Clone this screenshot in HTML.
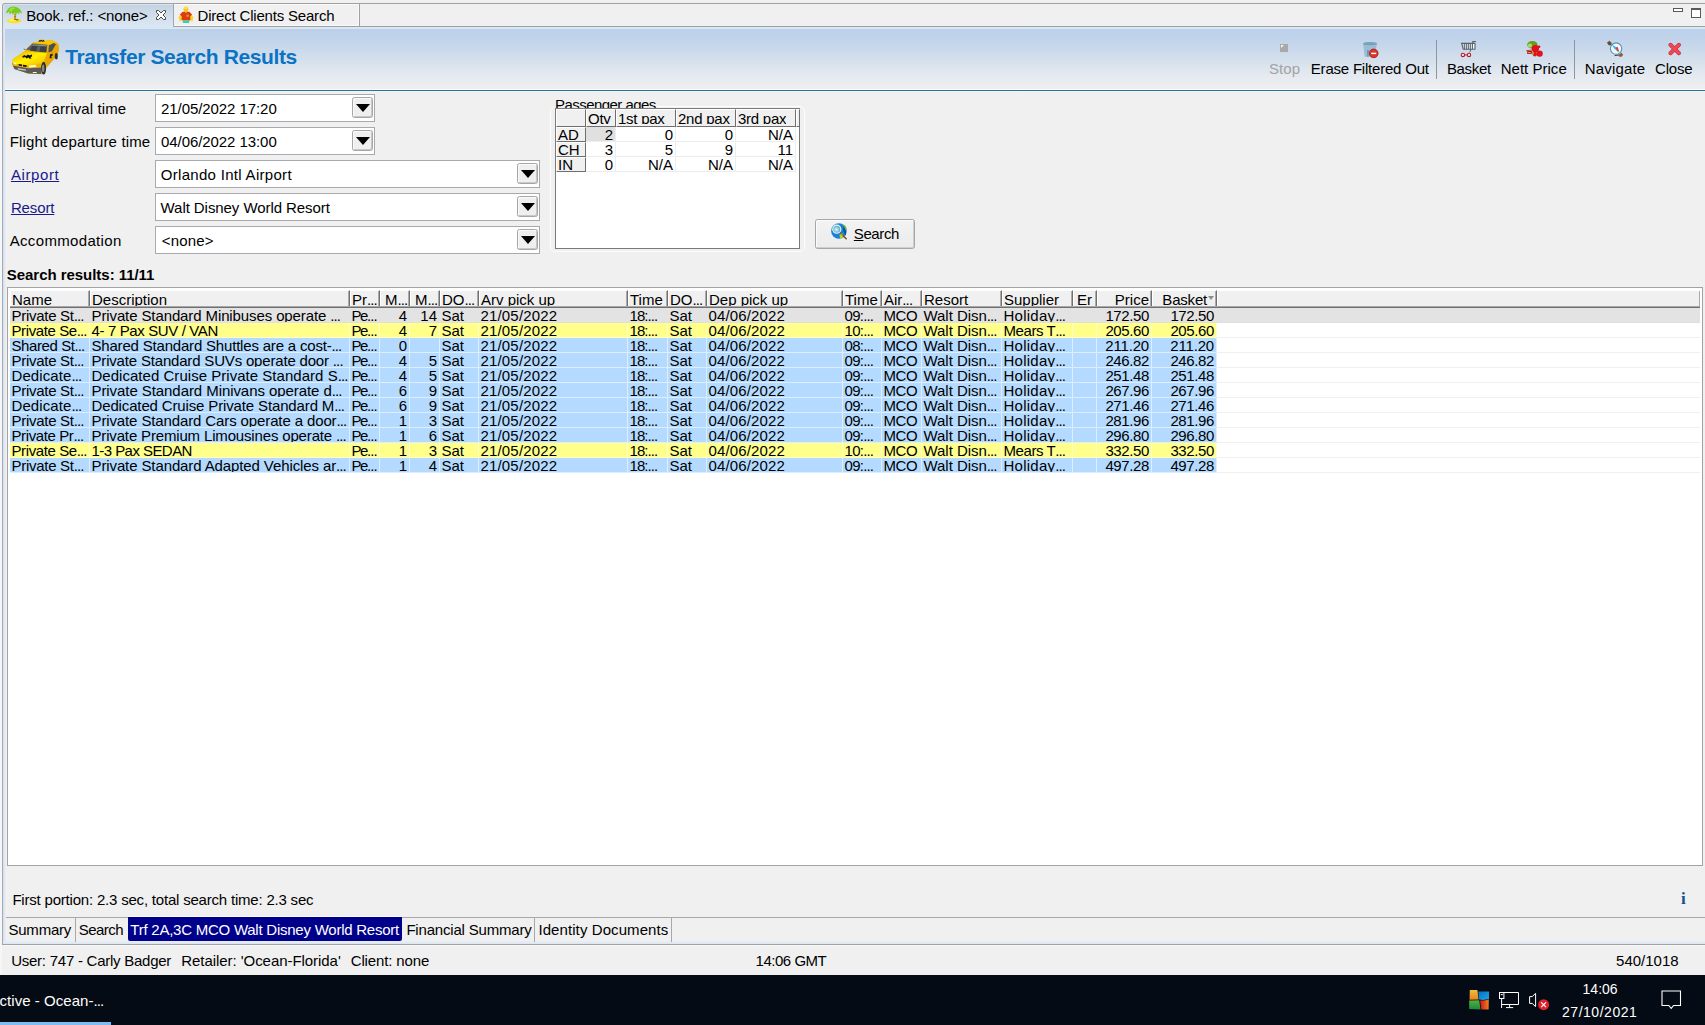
<!DOCTYPE html>
<html lang="en">
<head>
<meta charset="utf-8">
<title>Transfer Search Results</title>
<style>
*{box-sizing:border-box;margin:0;padding:0}
html,body{width:1705px;height:1025px;overflow:hidden;background:#f0f0f0}
body{position:relative;font-family:"Liberation Sans",sans-serif;font-size:15px;color:#000;line-height:18px}
.a{position:absolute;white-space:pre}
.t{position:absolute;white-space:pre;line-height:18px;height:18px}
.el{letter-spacing:-.9px}
/* top tab strip */
#topline{left:4px;top:3px;width:1701px;height:1px;background:#a0a0a0}
#topline2{left:173px;top:26px;width:1532px;height:1px;background:#a0a0a0}
#tab1{left:2px;top:3px;width:172px;height:26px;border:1px solid #9aa7b5;border-bottom:none;border-radius:3px 0 0 0;background:linear-gradient(#c4d2e0,#d2deeb 50%,#ddeaf6);box-shadow:inset 1px 1px 0 #dbe4ed}
#tab2{left:173px;top:4px;width:187px;height:22px;border-right:1px solid #a0a0a0;background:#f0f0f0;box-shadow:inset 1px 1px 0 #f9f9f9,inset -1px -1px 0 #f9f9f9}
/* header */
#strip{left:3px;top:27px;width:1702px;height:2px;background:#d9e6f4}
#hdr{left:5px;top:29px;width:1700px;height:60px;background:linear-gradient(#bbd0ea 0%,#c3d5eb 22%,#d3dfec 50%,#e4e9f0 75%,#efefef 100%)}
#hdrline{left:5px;top:89px;width:1700px;height:3px;background:linear-gradient(#f8fbfd 0,#f8fbfd 1px,#3d6b92 1px,#3d6b92 2px,#dffaff 2px)}
#lb0{left:0;top:4px;width:2px;height:971px;background:#f6f6f6}
#lb1{left:2px;top:28px;width:1px;height:916px;background:#a2acb8}
#lb2{left:3px;top:28px;width:3px;height:916px;background:linear-gradient(90deg,#d3dde9,#eef1f4)}
.ttl{position:absolute;white-space:pre;font-size:21px;font-weight:700;color:#0b72c4;line-height:24px}
.tb{position:absolute;white-space:pre;line-height:18px}
.sep{position:absolute;top:40px;width:1px;height:39px;background:#8f959c}
/* form */
.inp{position:absolute;height:28px;background:#fff;border:1px solid #a9a9ad}
.dd{position:absolute;width:21px;height:21px;border:1px solid #a6a6a6;background:#efefef;border-radius:2.5px;box-shadow:inset 1px 1px 0 #fafafa,inset -1px -1px 0 #c8c8c8}
.dd:after{content:"";position:absolute;left:3px;top:6px;border-left:7px solid transparent;border-right:7px solid transparent;border-top:8px solid #000}
.lnk{color:#1a1a8c;text-decoration:underline}
/* passenger ages */
#pgb{left:550px;top:106px;width:255px;height:146px;border:1px solid #fdfdfd;border-radius:5px}
#ptab{left:555px;top:108px;width:245px;height:141px;background:#fff;border:1px solid #7a7a7a}
.ph{position:absolute;height:18px;top:109px;background:#f0f0f0;border-left:1px solid #fff;border-top:1px solid #fff;border-right:1px solid #6e6e6e;border-bottom:1px solid #6e6e6e;overflow:hidden;white-space:pre;line-height:15px}
.ph>span{position:absolute;left:1px;top:1px;height:13px;overflow:hidden;letter-spacing:-.25px}
.pr{position:absolute;left:556px;width:30px;height:15px;background:#f0f0f0;border-left:1px solid #fff;border-top:1px solid #fff;border-right:1px solid #6e6e6e;border-bottom:1px solid #6e6e6e;overflow:hidden;white-space:pre;line-height:15px}
.pr>span{position:absolute;left:1px;top:-1px}
.pc{position:absolute;height:15px;overflow:hidden;white-space:pre;line-height:15px;border-right:1px solid #ededed;border-bottom:1px solid #ededed}
.pc>span{position:absolute;right:2px;top:0}
/* search btn */
#sbtn{left:815px;top:219px;width:100px;height:30px;border:1px solid #a6a6a6;background:linear-gradient(#f3f3f3,#ebebeb);border-radius:2.5px;box-shadow:inset 1px 1px 0 #fbfbfb,inset -1px -1px 0 #cfcfcf}
/* grid */
#grid{left:7px;top:287px;width:1696px;height:579px;background:#fff;border:1px solid #a3a3a3}
#gh{left:10px;top:290px;width:1690px;height:16px;background:#f0f0f0;border-top:1px solid #fff}
#ghl1{left:10px;top:306px;width:1690px;height:1px;background:#a8a8a8}
#ghl2{left:10px;top:307px;width:1690px;height:1px;background:#6f6f6f}
.hc{position:absolute;top:290px;height:17px;border-top:1px solid #fff;border-left:1px solid #fff;border-right:1px solid #707070;box-shadow:inset -1px 0 0 #ababab;overflow:hidden;white-space:pre;line-height:15px;background:#f0f0f0}
.hc>span{position:absolute;top:1px;left:1px}
.hc.r>span{left:auto;right:2px}
.row{position:absolute;left:10px;width:1690px;height:15px;border-bottom:1px solid #f0f0f0}
.row.sel{background:#e3e3e3;border-bottom-color:#dfdfdf}
.sel .c{border-color:transparent}
.c{position:absolute;top:0;height:15px;overflow:hidden;white-space:pre;line-height:15px;border-right:1px solid rgba(255,255,255,.55);border-bottom:1px solid rgba(255,255,255,.55)}
.c>span{position:absolute;left:1.5px;top:0}
.c.r>span{left:auto;right:2px}
.y .c{background:#ffff8a}
.b .c{background:#b4dbff}
/* bottom */
#tabtop{left:6px;top:917px;width:1699px;height:1px;background:#a8a8a8}
#tabbot{left:2px;top:944px;width:1703px;height:2px;background:linear-gradient(#9ea3a8 0,#9ea3a8 1px,#f8f8f8 1px)}
#tabbot0{left:3px;top:941px;width:1702px;height:3px;background:linear-gradient(#eaeff5,#dbe5ef)}
.bsep{position:absolute;top:918px;width:1px;height:24px;background:#a8a8a8}
#seltab{left:128px;top:916px;width:274px;height:25px;background:#00008b;border-top:1px solid #fafaff;border-radius:0 0 2px 2px}
#task{left:0;top:975px;width:1705px;height:50px;background:#050b15}
#taskul{left:0;top:1022px;width:111px;height:3px;background:#7cbcf0}
</style>
</head>
<body>
<div class="a" id="topline"></div><div class="a" id="topline2"></div>
<div class="a" id="tab2"></div><div class="a" id="tab1"></div>
<div class="t" style="letter-spacing:-0.11px;left:26.2px;top:7px">Book. ref.: &lt;none&gt;</div>
<div class="t" style="letter-spacing:-0.19px;left:197.5px;top:7px">Direct Clients Search</div>
<svg class="a" style="left:4px;top:4px" width="192" height="22" viewBox="4 4 192 22">
<!-- palm tree -->
<ellipse cx="14.2" cy="20.8" rx="7.2" ry="2.4" fill="#f7e31c"/><ellipse cx="13" cy="20.2" rx="4" ry="1.2" fill="#fff04a"/>
<path d="M14.2 13.4 16.2 13.6 15.9 17 16.6 20.2 14 20.2 14.2 17Z" fill="#f2c22a"/>
<path d="M14.3 14.8h1.8M14.2 16.4h1.8M14.1 18h2M14.2 19.5h2.3" stroke="#7a4a12" stroke-width=".7"/>
<path d="M16.2 19.6 18.6 19.4 18.4 20.2 16.4 20.4Z" fill="#3a3012"/>
<path d="M6 12.4 8 8.8 10.4 7 13.6 6.6 17 7.2 19.8 9 21.8 12 21.4 13.6 19.4 11.8 19.2 14.4 17.2 12.6 16.2 14.6 14.6 12.8 12.6 14.8 11.8 12.4 9.6 14.6 9.2 11.6 7 13.2Z" fill="#79cc1e"/>
<path d="M9 9.6 12 7.6 15.4 8 13 9.6 11 12Z" fill="#9be044"/>
<!-- tab close -->
<path d="M156.5 10.5 158.5 10.5 161 13 163.5 10.5 165.5 10.5 165.5 12.5 163 15 165.5 17.5 165.5 19.5 163.5 19.5 161 17 158.5 19.5 156.5 19.5 156.5 17.5 159 15 156.5 12.5Z" fill="#fff" stroke="#4a4a4a" stroke-width="1" stroke-linejoin="miter"/>
<!-- person -->
<circle cx="185.9" cy="8.9" r="2.5" fill="#f6c81a"/><ellipse cx="185.9" cy="8" rx="1.6" ry=".9" fill="#ffe860"/>
<path d="M180 14.4 182.6 11.8 189.4 11.8 192 14.4 191 19.6 189.4 20.4 182.6 20.4 181 19.6Z" fill="#e23a0c"/>
<path d="M184.6 11.8 186 13.6 187.4 11.8Z" fill="#f2a01a"/>
<rect x="186.4" y="14.6" width="2.4" height="2.2" fill="#a8b030"/>
<path d="M178.6 17 180.4 15 181.8 16.6 181.4 20.8 179.6 21.4Z" fill="#f8d428"/><path d="M193.4 17 191.6 15 190.2 16.6 190.6 20.8 192.4 21.4Z" fill="#f8d428"/>
<path d="M182.4 20.4 189.6 20.4 189 23 183 23Z" fill="#38d0b0"/>
</svg>
<svg class="a" style="left:1672px;top:7px" width="31" height="12" viewBox="1672 7 31 12">
<rect x="1673.5" y="8.5" width="9" height="3" fill="#fff" stroke="#595959"/>
<rect x="1691.5" y="8.5" width="9" height="9" fill="#fff" stroke="#595959"/><path d="M1691 9.5h10" stroke="#595959"/>
</svg>

<div class="a" id="lb0"></div><div class="a" id="lb1"></div><div class="a" id="lb2"></div>
<div class="a" id="strip"></div><div class="a" id="hdr"></div><div class="a" id="hdrline"></div>
<div class="ttl" style="letter-spacing:-0.38px;left:65.2px;top:45px">Transfer Search Results</div>
<svg class="a" style="left:5px;top:32px" width="65" height="50" viewBox="0 0 65 50">
<defs><linearGradient id="tx1" x1="0" y1="0" x2="1" y2="1"><stop offset="0" stop-color="#eeb000"/><stop offset=".5" stop-color="#fff200"/><stop offset="1" stop-color="#f2b000"/></linearGradient></defs>
<path d="M9.3 37 7 31.4 7.8 27.3 19.5 19.3 27 11 33.5 9.6 34 7.8 39 7.6 40 9 46.3 7.8 51.7 10.6 53.4 12.4 53.9 17.6 52.6 23.8 49.3 26.6 43 33.9 36.3 42.2 23 41.6Z" fill="#e9b400"/>
<path d="M7.8 27.3 19.5 19.5 42 21 38 31.2 23.4 33.9 7.3 31.2Z" fill="url(#tx1)"/>
<path d="M27 11 34 9.6 46.3 7.9 51.7 10.8 48.6 10.8 43.6 12.8Z" fill="#f6c800"/>
<path d="M42 21 44 13 53.2 12.2 53.8 17.6 52.4 23.6 49.3 26.4 43 33.8 40.3 30.6Z" fill="#e8a800"/>
<path d="M21 17.6 27.6 11.6 42.4 12.8 41.5 20.6 34.1 20Z" fill="#5a5f63"/>
<path d="M27 14 33 13 31 19.4 25 18.6Z M35.5 14.5 41.5 14.6 41 20 34.5 19.4Z" fill="#3c4043"/><path d="M28 12.4 41.6 13.2 41.6 14.2 27.4 13.4Z" fill="#8a9094"/>
<path d="M43.9 13.4 48.8 11 50.9 12.2 46.8 19.5 43.4 20.2Z" fill="#4b4f52"/>
<path d="M18.2 16.2 20.8 17.6 20 18Z" fill="#333"/>
<path d="M33.9 10 35 8 35.8 9.6 36.6 8 37.6 9.6 38.4 8 39 9.8" fill="none" stroke="#111" stroke-width=".8"/>
<path d="M17.2 24.6 19.4 23 21 24 23 22.4 24.6 23.4 26.8 22.6 27.2 24.4 25.4 25 26.6 26.6 24.4 26.8 23.4 25.4 21.4 26.4 20.2 25 18 25.8Z" fill="#111"/>
<path d="M45 22.4 47.4 21.6 47.8 23.6 46.2 24.4 46.8 26 44.6 26.4Z" fill="#222"/>
<path d="M7 31.2 23.4 34.2 36.2 33.6 36.2 42 23 41.6 9.3 37Z" fill="#5b5b5b"/><path d="M7 31.2 23.4 33.4 36.4 33 36.4 35.4 23.4 36.2 7.6 33.4Z" fill="#f0b800"/>
<path d="M13.6 31.9 17 32.5 17 34.3 13.6 33.6Z M18 32.7 21.6 33.2 21.6 34.9 18 34.5Z" fill="#15120a"/>
<path d="M24 33.4 31 33 31.4 34.8 24 35.4Z" fill="#fffde0"/>
<path d="M8.6 30.5 11.2 31 11.2 32.4 8.6 32Z" fill="#fffde0"/>
<path d="M12.7 36 21 37.4 21 38.8 12.7 37.4Z" fill="#c9c9c9"/>
<path d="M27.8 40 31.7 40 31.7 41 27.8 41Z" fill="#f4f4f4"/>
<ellipse cx="38.6" cy="36.2" rx="2.5" ry="6.4" fill="#2e2e2e"/><ellipse cx="38.2" cy="36.4" rx="1.2" ry="3.8" fill="#8a8a8a"/>
<ellipse cx="51.3" cy="24.2" rx="1.5" ry="3.2" fill="#2e2e2e"/>
</svg>

<div class="tb" style="letter-spacing:0.11px;left:1268.9px;top:60px;color:#a3a3a3">Stop</div>
<div class="tb" style="letter-spacing:-0.21px;left:1310.8px;top:60px">Erase Filtered Out</div>
<div class="tb" style="letter-spacing:-0.33px;left:1446.9px;top:60px">Basket</div>
<div class="tb" style="letter-spacing:0.02px;left:1500.7px;top:60px">Nett Price</div>
<div class="tb" style="letter-spacing:0.16px;left:1584.8px;top:60px">Navigate</div>
<div class="tb" style="letter-spacing:-0.19px;left:1655.0px;top:60px">Close</div>
<div class="sep" style="left:1436px"></div><div class="sep" style="left:1574px"></div>
<svg class="a" style="left:1275px;top:38px" width="420" height="22" viewBox="1275 38 420 22">
<!-- stop -->
<rect x="1280" y="44" width="8" height="8" fill="#a9a9a9"/><path d="M1281 45h3l-3 3z" fill="#f4f4f4"/>
<!-- erase filtered out: bin + red minus -->
<path d="M1363 44 1377 44 1376.4 47 1374 56.8 1364.6 56.8 1363.6 47Z" fill="#9bbcd2"/>
<path d="M1367 50 1369 50 1368.6 56.8 1367.2 56.8Z" fill="#6f97b4"/>
<ellipse cx="1370" cy="43.6" rx="7" ry="1.7" fill="#6e9ab8"/><ellipse cx="1370" cy="43.3" rx="5.6" ry="1" fill="#7ba5c0"/>
<circle cx="1373.7" cy="53.4" r="4.6" fill="#d8372c"/><circle cx="1373.7" cy="53.4" r="4.3" fill="none" stroke="#a81e22" stroke-width=".7"/>
<rect x="1371.2" y="52.7" width="5" height="1.4" fill="#fff"/>
<!-- basket -->
<path d="M1461.8 43.4 1463.2 49.4 1475 49.4 1475 43.4Z" fill="#f4f6f8"/>
<path d="M1461 43.4H1475.4M1472.8 43.4V41.5H1476M1463.2 49.3H1475.2M1475 43.4V49.4M1461.8 43.4 1463.2 49.4" fill="none" stroke="#56616b" stroke-width="1.1"/>
<path d="M1464.3 43.4V49.3M1466.3 43.4V49.3M1468.3 43.4V49.3M1470.3 43.4V49.3M1472.4 43.4V49.3" stroke="#56616b" stroke-width="1.1"/>
<path d="M1470.7 49.4 1470.5 51.2 1469.3 52.2" fill="none" stroke="#56616b" stroke-width="1"/>
<circle cx="1462.9" cy="54.9" r="1.7" fill="#ffe6e8" stroke="#b41c2c" stroke-width="1.1"/><circle cx="1469" cy="54.9" r="1.7" fill="#ffe6e8" stroke="#b41c2c" stroke-width="1.1"/>
<path d="M1464.8 54.9H1467.2" stroke="#b41c2c" stroke-width="1"/>
<!-- nett price -->
<ellipse cx="1532.4" cy="44.8" rx="5.2" ry="3.8" fill="#62a01c"/><ellipse cx="1530" cy="45.4" rx="2.2" ry="2" fill="#aad870"/>
<circle cx="1535.3" cy="48.8" r="3.7" fill="#e0121c"/><circle cx="1539.6" cy="53.6" r="3.2" fill="#e0121c"/><circle cx="1539.1" cy="46.8" r="1.3" fill="#d30f1a"/>
<circle cx="1534.9" cy="54.6" r="2" fill="#e0121c"/><path d="M1533.4 50 1536.4 51.4 1536 55 1533.4 54Z" fill="#e0121c"/>
<rect x="1527.2" y="51" width="4.8" height="2.9" fill="#b81520"/><rect x="1528.2" y="52" width="2.4" height="1" fill="#ff9a9a"/>
<path d="M1526.2 50.6 1531.8 50.2" stroke="#a85a18" stroke-width="1"/>
<circle cx="1532.8" cy="53.4" r="1.3" fill="#a8a030"/>
<!-- navigate compass -->
<circle cx="1616.1" cy="48.6" r="5.7" fill="#f2f9fd" stroke="#5a8fc0" stroke-width="1.1"/>
<path d="M1611.6 44.4 1617.2 47.8 1615 49.8Z" fill="#3cb4e0"/>
<path d="M1620.2 53.4 1615 49.8 1617.2 47.8Z" fill="#6fd0e6"/>
<path d="M1615.6 48 1617.4 46.6 1619 50.8 1617.6 51.6Z" fill="#d8402c"/>
<path d="M1607 42.6 1609.6 40.8 1612 43.6 1610.6 45.4 1608.4 45Z" fill="#6e4e2a"/><path d="M1619.2 54.2 1621.6 52.8 1623.2 55 1621.2 57 1618.6 56.2Z" fill="#86623a"/>
<path d="M1614.6 55.6 1619 55" stroke="#4a3a2a" stroke-width="1"/>
<!-- close X -->
<path d="M1670.4 44.8 1679 53.2M1679 44.8 1670.4 53.2" stroke="#cf3040" stroke-width="4" stroke-linecap="round"/>
<path d="M1670.4 44.8 1679 53.2M1679 44.8 1670.4 53.2" stroke="#ee4a56" stroke-width="2.6" stroke-linecap="round"/>
</svg>

<div class="t" style="letter-spacing:0.12px;left:9.8px;top:100px">Flight arrival time</div>
<div class="t" style="letter-spacing:0.14px;left:9.8px;top:133px">Flight departure time</div>
<div class="t lnk" style="letter-spacing:0.60px;left:10.9px;top:166px">Airport</div>
<div class="t lnk" style="letter-spacing:-0.13px;left:10.9px;top:199px">Resort</div>
<div class="t" style="letter-spacing:0.34px;left:9.7px;top:232px">Accommodation</div>
<div class="inp" style="left:155px;top:94px;width:220px"></div>
<div class="dd" style="left:352px;top:97px"></div>
<div class="t" style="letter-spacing:-0.07px;left:161.0px;top:100px">21/05/2022 17:20</div>
<div class="inp" style="left:155px;top:127px;width:220px"></div>
<div class="dd" style="left:352px;top:130px"></div>
<div class="t" style="letter-spacing:-0.07px;left:161.0px;top:133px">04/06/2022 13:00</div>
<div class="inp" style="left:155px;top:160px;width:385px"></div>
<div class="dd" style="left:517px;top:163px"></div>
<div class="t" style="letter-spacing:0.30px;left:160.8px;top:166px">Orlando Intl Airport</div>
<div class="inp" style="left:155px;top:193px;width:385px"></div>
<div class="dd" style="left:517px;top:196px"></div>
<div class="t" style="letter-spacing:-0.07px;left:160.6px;top:199px">Walt Disney World Resort</div>
<div class="inp" style="left:155px;top:226px;width:385px"></div>
<div class="dd" style="left:517px;top:229px"></div>
<div class="t" style="letter-spacing:0.15px;left:161.8px;top:232px">&lt;none&gt;</div>
<div class="t" style="letter-spacing:-0.04px;left:6.8px;top:266px;font-weight:700">Search results: 11/11</div>
<div class="a" id="pgb"></div>
<div class="a" style="left:554px;top:96px;height:12px;overflow:hidden;line-height:18px;letter-spacing:-.55px;background:#f0f0f0;padding:0 1px">Passenger ages</div>
<div class="a" id="ptab"></div>
<div class="ph" style="left:556px;width:30px"><span></span></div>
<div class="ph" style="left:586px;width:30px"><span>Qty</span></div>
<div class="ph" style="left:616px;width:60px"><span>1st pax</span></div>
<div class="ph" style="left:676px;width:60px"><span>2nd pax</span></div>
<div class="ph" style="left:736px;width:60px"><span>3rd pax</span></div>
<div class="ph" style="left:796px;width:4px"><span></span></div>
<div class="pr" style="top:127px"><span>AD</span></div>
<div class="pc" style="left:586px;top:127px;width:30px;background:#e0e0e0"><span>2</span></div>
<div class="pc" style="left:616px;top:127px;width:60px"><span>0</span></div>
<div class="pc" style="left:676px;top:127px;width:60px"><span>0</span></div>
<div class="pc" style="left:736px;top:127px;width:60px"><span>N/A</span></div>
<div class="pr" style="top:142px"><span>CH</span></div>
<div class="pc" style="left:586px;top:142px;width:30px"><span>3</span></div>
<div class="pc" style="left:616px;top:142px;width:60px"><span>5</span></div>
<div class="pc" style="left:676px;top:142px;width:60px"><span>9</span></div>
<div class="pc" style="left:736px;top:142px;width:60px"><span>11</span></div>
<div class="pr" style="top:157px"><span>IN</span></div>
<div class="pc" style="left:586px;top:157px;width:30px"><span>0</span></div>
<div class="pc" style="left:616px;top:157px;width:60px"><span>N/A</span></div>
<div class="pc" style="left:676px;top:157px;width:60px"><span>N/A</span></div>
<div class="pc" style="left:736px;top:157px;width:60px"><span>N/A</span></div>
<div class="a" id="sbtn"></div>
<div class="t" style="letter-spacing:-0.39px;left:853.8px;top:225px"><u>S</u>earch</div>
<svg class="a" style="left:829px;top:221px" width="20" height="20" viewBox="829 221 20 20">
<defs><radialGradient id="lens" cx=".45" cy=".55" r=".6"><stop offset="0" stop-color="#eafff4"/><stop offset=".45" stop-color="#9ccfd8"/><stop offset="1" stop-color="#5a98c8"/></radialGradient></defs>
<circle cx="838.9" cy="231" r="7.8" fill="#1b80d6"/>
<path d="M842.4 224 845.6 226 846.9 229.4 845.6 230.6 844.6 228.4 843.2 226.6Z" fill="#5fc23a"/>
<path d="M843.6 225.6 846.2 232 845.6 236 843 230Z" fill="#0c4f9c"/>
<path d="M839.6 234.6 842.6 233.6 844 236.6 841.6 238.4 839.8 237.6Z" fill="#a6e02a"/>
<circle cx="836.8" cy="229.2" r="4.6" fill="#dffcff"/>
<circle cx="836.8" cy="229.2" r="3.5" fill="url(#lens)"/>
<path d="M840.4 233.2 846.2 238.8" stroke="#7a4a16" stroke-width="1.5" stroke-linecap="round"/>
<path d="M840.6 233.6 842.6 235.6" stroke="#c8b020" stroke-width="1.2"/>
</svg>

<div class="a" id="grid"></div><div class="a" id="gh"></div>
<div class="hc" style="left:10px;width:80px"><span>Name</span></div>
<div class="hc" style="left:90px;width:260px"><span>Description</span></div>
<div class="hc" style="left:350px;width:30px"><span>Pr<span class="el">...</span></span></div>
<div class="hc" style="left:380px;width:30px"><span style="left:4px">M<span class="el">...</span></span></div>
<div class="hc" style="left:410px;width:30px"><span style="left:4px">M<span class="el">...</span></span></div>
<div class="hc" style="left:440px;width:39px"><span>DO<span class="el">...</span></span></div>
<div class="hc" style="left:479px;width:149px"><span>Arv pick up</span></div>
<div class="hc" style="left:628px;width:40px"><span>Time</span></div>
<div class="hc" style="left:668px;width:39px"><span>DO<span class="el">...</span></span></div>
<div class="hc" style="left:707px;width:136px"><span>Dep pick up</span></div>
<div class="hc" style="left:843px;width:39px"><span>Time</span></div>
<div class="hc" style="left:882px;width:40px"><span>Air<span class="el">...</span></span></div>
<div class="hc" style="left:922px;width:80px"><span>Resort</span></div>
<div class="hc" style="left:1002px;width:71px"><span>Supplier</span></div>
<div class="hc" style="left:1073px;width:24px"><span style="left:3px">Er</span></div>
<div class="hc r" style="left:1097px;width:55px"><span>Price</span></div>
<div class="hc" style="left:1152px;width:65px"><span style="left:auto;right:9px;letter-spacing:-.2px">Basket</span><i style="position:absolute;right:2px;top:5px;border-left:3.5px solid transparent;border-right:3.5px solid transparent;border-top:4px solid #8c8c8c"></i></div>
<div class="hc" style="left:1217px;width:483px;border-right:none"></div>
<div class="a" id="ghl1"></div><div class="a" id="ghl2"></div>
<div class="row sel" style="top:308px">
<div class="c" style="left:0px;width:80px"><span style="letter-spacing:-0.28px">Private St<span class="el">...</span></span></div>
<div class="c" style="left:80px;width:260px"><span style="letter-spacing:-0.11px">Private Standard Minibuses operate <span class="el">...</span></span></div>
<div class="c" style="left:340px;width:30px"><span style="letter-spacing:-1.40px">Pe<span class="el">...</span></span></div>
<div class="c r" style="left:370px;width:30px"><span>4</span></div>
<div class="c r" style="left:400px;width:30px"><span>14</span></div>
<div class="c" style="left:430px;width:39px"><span>Sat</span></div>
<div class="c" style="left:469px;width:149px"><span style="letter-spacing:0.17px">21/05/2022</span></div>
<div class="c" style="left:618px;width:40px"><span style="letter-spacing:-0.96px">18:<span class="el">...</span></span></div>
<div class="c" style="left:658px;width:39px"><span>Sat</span></div>
<div class="c" style="left:697px;width:136px"><span style="letter-spacing:0.14px">04/06/2022</span></div>
<div class="c" style="left:833px;width:39px"><span style="letter-spacing:-0.69px">09:<span class="el">...</span></span></div>
<div class="c" style="left:872px;width:40px"><span style="letter-spacing:-0.47px">MCO</span></div>
<div class="c" style="left:912px;width:80px"><span style="letter-spacing:-0.04px">Walt Disn<span class="el">...</span></span></div>
<div class="c" style="left:992px;width:71px"><span style="letter-spacing:0.25px">Holiday<span class="el">...</span></span></div>
<div class="c" style="left:1063px;width:24px"><span></span></div>
<div class="c r" style="left:1087px;width:55px"><span style="letter-spacing:-0.38px">172.50</span></div>
<div class="c r" style="left:1142px;width:65px"><span style="letter-spacing:-0.38px">172.50</span></div>
</div>
<div class="row y" style="top:323px">
<div class="c" style="left:0px;width:80px"><span style="letter-spacing:-0.40px">Private Se<span class="el">...</span></span></div>
<div class="c" style="left:80px;width:260px"><span style="letter-spacing:-0.37px">4- 7 Pax SUV / VAN</span></div>
<div class="c" style="left:340px;width:30px"><span style="letter-spacing:-1.40px">Pe<span class="el">...</span></span></div>
<div class="c r" style="left:370px;width:30px"><span>4</span></div>
<div class="c r" style="left:400px;width:30px"><span>7</span></div>
<div class="c" style="left:430px;width:39px"><span>Sat</span></div>
<div class="c" style="left:469px;width:149px"><span style="letter-spacing:0.17px">21/05/2022</span></div>
<div class="c" style="left:618px;width:40px"><span style="letter-spacing:-0.96px">18:<span class="el">...</span></span></div>
<div class="c" style="left:658px;width:39px"><span>Sat</span></div>
<div class="c" style="left:697px;width:136px"><span style="letter-spacing:0.14px">04/06/2022</span></div>
<div class="c" style="left:833px;width:39px"><span style="letter-spacing:-0.69px">10:<span class="el">...</span></span></div>
<div class="c" style="left:872px;width:40px"><span style="letter-spacing:-0.47px">MCO</span></div>
<div class="c" style="left:912px;width:80px"><span style="letter-spacing:-0.04px">Walt Disn<span class="el">...</span></span></div>
<div class="c" style="left:992px;width:71px"><span style="letter-spacing:-0.42px">Mears T<span class="el">...</span></span></div>
<div class="c" style="left:1063px;width:24px"><span></span></div>
<div class="c r" style="left:1087px;width:55px"><span style="letter-spacing:-0.38px">205.60</span></div>
<div class="c r" style="left:1142px;width:65px"><span style="letter-spacing:-0.38px">205.60</span></div>
</div>
<div class="row b" style="top:338px">
<div class="c" style="left:0px;width:80px"><span style="letter-spacing:-0.41px">Shared St<span class="el">...</span></span></div>
<div class="c" style="left:80px;width:260px"><span style="letter-spacing:-0.19px">Shared Standard Shuttles are a cost-<span class="el">...</span></span></div>
<div class="c" style="left:340px;width:30px"><span style="letter-spacing:-1.40px">Pe<span class="el">...</span></span></div>
<div class="c r" style="left:370px;width:30px"><span>0</span></div>
<div class="c r" style="left:400px;width:30px"><span></span></div>
<div class="c" style="left:430px;width:39px"><span>Sat</span></div>
<div class="c" style="left:469px;width:149px"><span style="letter-spacing:0.17px">21/05/2022</span></div>
<div class="c" style="left:618px;width:40px"><span style="letter-spacing:-0.96px">18:<span class="el">...</span></span></div>
<div class="c" style="left:658px;width:39px"><span>Sat</span></div>
<div class="c" style="left:697px;width:136px"><span style="letter-spacing:0.14px">04/06/2022</span></div>
<div class="c" style="left:833px;width:39px"><span style="letter-spacing:-0.69px">08:<span class="el">...</span></span></div>
<div class="c" style="left:872px;width:40px"><span style="letter-spacing:-0.47px">MCO</span></div>
<div class="c" style="left:912px;width:80px"><span style="letter-spacing:-0.04px">Walt Disn<span class="el">...</span></span></div>
<div class="c" style="left:992px;width:71px"><span style="letter-spacing:0.25px">Holiday<span class="el">...</span></span></div>
<div class="c" style="left:1063px;width:24px"><span></span></div>
<div class="c r" style="left:1087px;width:55px"><span style="letter-spacing:-0.19px">211.20</span></div>
<div class="c r" style="left:1142px;width:65px"><span style="letter-spacing:-0.19px">211.20</span></div>
</div>
<div class="row b" style="top:353px">
<div class="c" style="left:0px;width:80px"><span style="letter-spacing:-0.28px">Private St<span class="el">...</span></span></div>
<div class="c" style="left:80px;width:260px"><span style="letter-spacing:-0.18px">Private Standard SUVs operate door <span class="el">...</span></span></div>
<div class="c" style="left:340px;width:30px"><span style="letter-spacing:-1.40px">Pe<span class="el">...</span></span></div>
<div class="c r" style="left:370px;width:30px"><span>4</span></div>
<div class="c r" style="left:400px;width:30px"><span>5</span></div>
<div class="c" style="left:430px;width:39px"><span>Sat</span></div>
<div class="c" style="left:469px;width:149px"><span style="letter-spacing:0.17px">21/05/2022</span></div>
<div class="c" style="left:618px;width:40px"><span style="letter-spacing:-0.96px">18:<span class="el">...</span></span></div>
<div class="c" style="left:658px;width:39px"><span>Sat</span></div>
<div class="c" style="left:697px;width:136px"><span style="letter-spacing:0.14px">04/06/2022</span></div>
<div class="c" style="left:833px;width:39px"><span style="letter-spacing:-0.69px">09:<span class="el">...</span></span></div>
<div class="c" style="left:872px;width:40px"><span style="letter-spacing:-0.47px">MCO</span></div>
<div class="c" style="left:912px;width:80px"><span style="letter-spacing:-0.04px">Walt Disn<span class="el">...</span></span></div>
<div class="c" style="left:992px;width:71px"><span style="letter-spacing:0.25px">Holiday<span class="el">...</span></span></div>
<div class="c" style="left:1063px;width:24px"><span></span></div>
<div class="c r" style="left:1087px;width:55px"><span style="letter-spacing:-0.38px">246.82</span></div>
<div class="c r" style="left:1142px;width:65px"><span style="letter-spacing:-0.38px">246.82</span></div>
</div>
<div class="row b" style="top:368px">
<div class="c" style="left:0px;width:80px"><span style="letter-spacing:0.10px">Dedicate<span class="el">...</span></span></div>
<div class="c" style="left:80px;width:260px"><span style="letter-spacing:0.03px">Dedicated Cruise Private Standard S<span class="el">...</span></span></div>
<div class="c" style="left:340px;width:30px"><span style="letter-spacing:-1.40px">Pe<span class="el">...</span></span></div>
<div class="c r" style="left:370px;width:30px"><span>4</span></div>
<div class="c r" style="left:400px;width:30px"><span>5</span></div>
<div class="c" style="left:430px;width:39px"><span>Sat</span></div>
<div class="c" style="left:469px;width:149px"><span style="letter-spacing:0.17px">21/05/2022</span></div>
<div class="c" style="left:618px;width:40px"><span style="letter-spacing:-0.96px">18:<span class="el">...</span></span></div>
<div class="c" style="left:658px;width:39px"><span>Sat</span></div>
<div class="c" style="left:697px;width:136px"><span style="letter-spacing:0.14px">04/06/2022</span></div>
<div class="c" style="left:833px;width:39px"><span style="letter-spacing:-0.69px">09:<span class="el">...</span></span></div>
<div class="c" style="left:872px;width:40px"><span style="letter-spacing:-0.47px">MCO</span></div>
<div class="c" style="left:912px;width:80px"><span style="letter-spacing:-0.04px">Walt Disn<span class="el">...</span></span></div>
<div class="c" style="left:992px;width:71px"><span style="letter-spacing:0.25px">Holiday<span class="el">...</span></span></div>
<div class="c" style="left:1063px;width:24px"><span></span></div>
<div class="c r" style="left:1087px;width:55px"><span style="letter-spacing:-0.38px">251.48</span></div>
<div class="c r" style="left:1142px;width:65px"><span style="letter-spacing:-0.38px">251.48</span></div>
</div>
<div class="row b" style="top:383px">
<div class="c" style="left:0px;width:80px"><span style="letter-spacing:-0.28px">Private St<span class="el">...</span></span></div>
<div class="c" style="left:80px;width:260px"><span style="letter-spacing:-0.07px">Private Standard Minivans operate d<span class="el">...</span></span></div>
<div class="c" style="left:340px;width:30px"><span style="letter-spacing:-1.40px">Pe<span class="el">...</span></span></div>
<div class="c r" style="left:370px;width:30px"><span>6</span></div>
<div class="c r" style="left:400px;width:30px"><span>9</span></div>
<div class="c" style="left:430px;width:39px"><span>Sat</span></div>
<div class="c" style="left:469px;width:149px"><span style="letter-spacing:0.17px">21/05/2022</span></div>
<div class="c" style="left:618px;width:40px"><span style="letter-spacing:-0.96px">18:<span class="el">...</span></span></div>
<div class="c" style="left:658px;width:39px"><span>Sat</span></div>
<div class="c" style="left:697px;width:136px"><span style="letter-spacing:0.14px">04/06/2022</span></div>
<div class="c" style="left:833px;width:39px"><span style="letter-spacing:-0.69px">09:<span class="el">...</span></span></div>
<div class="c" style="left:872px;width:40px"><span style="letter-spacing:-0.47px">MCO</span></div>
<div class="c" style="left:912px;width:80px"><span style="letter-spacing:-0.04px">Walt Disn<span class="el">...</span></span></div>
<div class="c" style="left:992px;width:71px"><span style="letter-spacing:0.25px">Holiday<span class="el">...</span></span></div>
<div class="c" style="left:1063px;width:24px"><span></span></div>
<div class="c r" style="left:1087px;width:55px"><span style="letter-spacing:-0.38px">267.96</span></div>
<div class="c r" style="left:1142px;width:65px"><span style="letter-spacing:-0.38px">267.96</span></div>
</div>
<div class="row b" style="top:398px">
<div class="c" style="left:0px;width:80px"><span style="letter-spacing:0.10px">Dedicate<span class="el">...</span></span></div>
<div class="c" style="left:80px;width:260px"><span style="letter-spacing:-0.14px">Dedicated Cruise Private Standard M<span class="el">...</span></span></div>
<div class="c" style="left:340px;width:30px"><span style="letter-spacing:-1.40px">Pe<span class="el">...</span></span></div>
<div class="c r" style="left:370px;width:30px"><span>6</span></div>
<div class="c r" style="left:400px;width:30px"><span>9</span></div>
<div class="c" style="left:430px;width:39px"><span>Sat</span></div>
<div class="c" style="left:469px;width:149px"><span style="letter-spacing:0.17px">21/05/2022</span></div>
<div class="c" style="left:618px;width:40px"><span style="letter-spacing:-0.96px">18:<span class="el">...</span></span></div>
<div class="c" style="left:658px;width:39px"><span>Sat</span></div>
<div class="c" style="left:697px;width:136px"><span style="letter-spacing:0.14px">04/06/2022</span></div>
<div class="c" style="left:833px;width:39px"><span style="letter-spacing:-0.69px">09:<span class="el">...</span></span></div>
<div class="c" style="left:872px;width:40px"><span style="letter-spacing:-0.47px">MCO</span></div>
<div class="c" style="left:912px;width:80px"><span style="letter-spacing:-0.04px">Walt Disn<span class="el">...</span></span></div>
<div class="c" style="left:992px;width:71px"><span style="letter-spacing:0.25px">Holiday<span class="el">...</span></span></div>
<div class="c" style="left:1063px;width:24px"><span></span></div>
<div class="c r" style="left:1087px;width:55px"><span style="letter-spacing:-0.38px">271.46</span></div>
<div class="c r" style="left:1142px;width:65px"><span style="letter-spacing:-0.38px">271.46</span></div>
</div>
<div class="row b" style="top:413px">
<div class="c" style="left:0px;width:80px"><span style="letter-spacing:-0.28px">Private St<span class="el">...</span></span></div>
<div class="c" style="left:80px;width:260px"><span style="letter-spacing:-0.12px">Private Standard Cars operate a door<span class="el">...</span></span></div>
<div class="c" style="left:340px;width:30px"><span style="letter-spacing:-1.40px">Pe<span class="el">...</span></span></div>
<div class="c r" style="left:370px;width:30px"><span>1</span></div>
<div class="c r" style="left:400px;width:30px"><span>3</span></div>
<div class="c" style="left:430px;width:39px"><span>Sat</span></div>
<div class="c" style="left:469px;width:149px"><span style="letter-spacing:0.17px">21/05/2022</span></div>
<div class="c" style="left:618px;width:40px"><span style="letter-spacing:-0.96px">18:<span class="el">...</span></span></div>
<div class="c" style="left:658px;width:39px"><span>Sat</span></div>
<div class="c" style="left:697px;width:136px"><span style="letter-spacing:0.14px">04/06/2022</span></div>
<div class="c" style="left:833px;width:39px"><span style="letter-spacing:-0.69px">09:<span class="el">...</span></span></div>
<div class="c" style="left:872px;width:40px"><span style="letter-spacing:-0.47px">MCO</span></div>
<div class="c" style="left:912px;width:80px"><span style="letter-spacing:-0.04px">Walt Disn<span class="el">...</span></span></div>
<div class="c" style="left:992px;width:71px"><span style="letter-spacing:0.25px">Holiday<span class="el">...</span></span></div>
<div class="c" style="left:1063px;width:24px"><span></span></div>
<div class="c r" style="left:1087px;width:55px"><span style="letter-spacing:-0.38px">281.96</span></div>
<div class="c r" style="left:1142px;width:65px"><span style="letter-spacing:-0.38px">281.96</span></div>
</div>
<div class="row b" style="top:428px">
<div class="c" style="left:0px;width:80px"><span style="letter-spacing:-0.39px">Private Pr<span class="el">...</span></span></div>
<div class="c" style="left:80px;width:260px"><span style="letter-spacing:-0.16px">Private Premium Limousines operate <span class="el">...</span></span></div>
<div class="c" style="left:340px;width:30px"><span style="letter-spacing:-1.40px">Pe<span class="el">...</span></span></div>
<div class="c r" style="left:370px;width:30px"><span>1</span></div>
<div class="c r" style="left:400px;width:30px"><span>6</span></div>
<div class="c" style="left:430px;width:39px"><span>Sat</span></div>
<div class="c" style="left:469px;width:149px"><span style="letter-spacing:0.17px">21/05/2022</span></div>
<div class="c" style="left:618px;width:40px"><span style="letter-spacing:-0.96px">18:<span class="el">...</span></span></div>
<div class="c" style="left:658px;width:39px"><span>Sat</span></div>
<div class="c" style="left:697px;width:136px"><span style="letter-spacing:0.14px">04/06/2022</span></div>
<div class="c" style="left:833px;width:39px"><span style="letter-spacing:-0.69px">09:<span class="el">...</span></span></div>
<div class="c" style="left:872px;width:40px"><span style="letter-spacing:-0.47px">MCO</span></div>
<div class="c" style="left:912px;width:80px"><span style="letter-spacing:-0.04px">Walt Disn<span class="el">...</span></span></div>
<div class="c" style="left:992px;width:71px"><span style="letter-spacing:0.25px">Holiday<span class="el">...</span></span></div>
<div class="c" style="left:1063px;width:24px"><span></span></div>
<div class="c r" style="left:1087px;width:55px"><span style="letter-spacing:-0.38px">296.80</span></div>
<div class="c r" style="left:1142px;width:65px"><span style="letter-spacing:-0.38px">296.80</span></div>
</div>
<div class="row y" style="top:443px">
<div class="c" style="left:0px;width:80px"><span style="letter-spacing:-0.40px">Private Se<span class="el">...</span></span></div>
<div class="c" style="left:80px;width:260px"><span style="letter-spacing:-0.55px">1-3 Pax SEDAN</span></div>
<div class="c" style="left:340px;width:30px"><span style="letter-spacing:-1.40px">Pe<span class="el">...</span></span></div>
<div class="c r" style="left:370px;width:30px"><span>1</span></div>
<div class="c r" style="left:400px;width:30px"><span>3</span></div>
<div class="c" style="left:430px;width:39px"><span>Sat</span></div>
<div class="c" style="left:469px;width:149px"><span style="letter-spacing:0.17px">21/05/2022</span></div>
<div class="c" style="left:618px;width:40px"><span style="letter-spacing:-0.96px">18:<span class="el">...</span></span></div>
<div class="c" style="left:658px;width:39px"><span>Sat</span></div>
<div class="c" style="left:697px;width:136px"><span style="letter-spacing:0.14px">04/06/2022</span></div>
<div class="c" style="left:833px;width:39px"><span style="letter-spacing:-0.69px">10:<span class="el">...</span></span></div>
<div class="c" style="left:872px;width:40px"><span style="letter-spacing:-0.47px">MCO</span></div>
<div class="c" style="left:912px;width:80px"><span style="letter-spacing:-0.04px">Walt Disn<span class="el">...</span></span></div>
<div class="c" style="left:992px;width:71px"><span style="letter-spacing:-0.42px">Mears T<span class="el">...</span></span></div>
<div class="c" style="left:1063px;width:24px"><span></span></div>
<div class="c r" style="left:1087px;width:55px"><span style="letter-spacing:-0.38px">332.50</span></div>
<div class="c r" style="left:1142px;width:65px"><span style="letter-spacing:-0.38px">332.50</span></div>
</div>
<div class="row b" style="top:458px">
<div class="c" style="left:0px;width:80px"><span style="letter-spacing:-0.28px">Private St<span class="el">...</span></span></div>
<div class="c" style="left:80px;width:260px"><span style="letter-spacing:-0.11px">Private Standard Adapted Vehicles ar<span class="el">...</span></span></div>
<div class="c" style="left:340px;width:30px"><span style="letter-spacing:-1.40px">Pe<span class="el">...</span></span></div>
<div class="c r" style="left:370px;width:30px"><span>1</span></div>
<div class="c r" style="left:400px;width:30px"><span>4</span></div>
<div class="c" style="left:430px;width:39px"><span>Sat</span></div>
<div class="c" style="left:469px;width:149px"><span style="letter-spacing:0.17px">21/05/2022</span></div>
<div class="c" style="left:618px;width:40px"><span style="letter-spacing:-0.96px">18:<span class="el">...</span></span></div>
<div class="c" style="left:658px;width:39px"><span>Sat</span></div>
<div class="c" style="left:697px;width:136px"><span style="letter-spacing:0.14px">04/06/2022</span></div>
<div class="c" style="left:833px;width:39px"><span style="letter-spacing:-0.69px">09:<span class="el">...</span></span></div>
<div class="c" style="left:872px;width:40px"><span style="letter-spacing:-0.47px">MCO</span></div>
<div class="c" style="left:912px;width:80px"><span style="letter-spacing:-0.04px">Walt Disn<span class="el">...</span></span></div>
<div class="c" style="left:992px;width:71px"><span style="letter-spacing:0.25px">Holiday<span class="el">...</span></span></div>
<div class="c" style="left:1063px;width:24px"><span></span></div>
<div class="c r" style="left:1087px;width:55px"><span style="letter-spacing:-0.38px">497.28</span></div>
<div class="c r" style="left:1142px;width:65px"><span style="letter-spacing:-0.38px">497.28</span></div>
</div>
<div class="t" style="letter-spacing:-0.20px;left:12.4px;top:891px">First portion: 2.3 sec, total search time: 2.3 sec</div>
<div class="a" style="left:1681px;top:890px;font-family:'Liberation Serif',serif;font-weight:700;color:#17508f;font-size:17px;line-height:18px">i</div>
<div class="a" id="tabtop"></div><div class="a" id="tabbot0"></div><div class="a" id="tabbot"></div>
<div class="a" id="seltab"></div>
<div class="bsep" style="left:75px"></div>
<div class="bsep" style="left:534px"></div>
<div class="bsep" style="left:671px"></div>
<div class="t" style="letter-spacing:-0.20px;left:8.4px;top:921px">Summary</div>
<div class="t" style="letter-spacing:-0.52px;left:78.7px;top:921px">Search</div>
<div class="t" style="letter-spacing:-0.24px;left:130.3px;top:921px;color:#fff">Trf 2A,3C MCO Walt Disney World Resort</div>
<div class="t" style="letter-spacing:-0.19px;left:406.4px;top:921px">Financial Summary</div>
<div class="t" style="letter-spacing:0.09px;left:538.4px;top:921px">Identity Documents</div>
<div class="t" style="letter-spacing:-0.25px;left:11.2px;top:952px">User: 747 - Carly Badger</div>
<div class="t" style="letter-spacing:-0.05px;left:181.2px;top:952px">Retailer: 'Ocean-Florida'</div>
<div class="t" style="letter-spacing:-0.13px;left:350.7px;top:952px">Client: none</div>
<div class="t" style="letter-spacing:-0.48px;left:755.6px;top:952px">14:06 GMT</div>
<div class="t" style="letter-spacing:-0.01px;left:1616.1px;top:952px">540/1018</div>
<div class="a" id="task"></div><div class="a" id="taskul"></div>
<div class="t" style="letter-spacing:0.05px;left:-0.5px;top:992px;color:#fff">ctive - Ocean-<span class="el">...</span></div>
<div class="t" style="letter-spacing:0.03px;left:1582.5px;top:980px;color:#fff;font-size:14px">14:06</div>
<div class="t" style="letter-spacing:0.53px;left:1562.0px;top:1003px;color:#fff;font-size:14px">27/10/2021</div>
<svg class="a" style="left:1465px;top:986px" width="222" height="28" viewBox="1465 986 222 28">
<defs>
<linearGradient id="av1" x1="0" y1="0" x2="0" y2="1"><stop offset="0" stop-color="#f0c03a"/><stop offset="1" stop-color="#e8801c"/></linearGradient>
<linearGradient id="av2" x1="0" y1="0" x2="1" y2="1"><stop offset="0" stop-color="#0a6fc0"/><stop offset="1" stop-color="#1aa8e0"/></linearGradient>
<linearGradient id="av3" x1="0" y1="0" x2="0" y2="1"><stop offset="0" stop-color="#58b040"/><stop offset="1" stop-color="#1c8a3c"/></linearGradient>
<linearGradient id="av4" x1="0" y1="0" x2="1" y2="0"><stop offset="0" stop-color="#d4141c"/><stop offset="1" stop-color="#f08020"/></linearGradient>
</defs>
<path d="M1469.8 990 1477.4 990 1478.6 999.6 1469.6 999.8Z" fill="url(#av1)"/>
<path d="M1478.2 991.6 1489 991.6 1489 999 1483 1000 1479.2 999.6Z" fill="url(#av2)"/>
<path d="M1469.2 1000.4 1479.2 1000.2 1480.6 1009.4 1469.2 1009Z" fill="url(#av3)"/>
<path d="M1480 1000.6 1484 1000.6 1488.8 999.6 1488.6 1009.6 1481.4 1009.4Z" fill="url(#av4)"/>
<!-- network -->
<path d="M1504 992.5H1518.5V1004.5H1502" fill="none" stroke="#fff" stroke-width="1"/>
<path d="M1509.6 1004.5V1007.5M1506 1007.6H1513.2" fill="none" stroke="#fff" stroke-width="1"/>
<rect x="1499.5" y="992.5" width="4.4" height="6" fill="#050b15" stroke="#fff" stroke-width="1"/>
<path d="M1500.8 994.6h2" stroke="#fff" stroke-width="1"/>
<path d="M1501.6 998.6V1008" stroke="#fff" stroke-width="1"/>
<!-- speaker -->
<path d="M1529.6 996.6H1532.2L1535.6 993.4V1006.6L1532.2 1003.4H1529.6Z" fill="none" stroke="#fff" stroke-width="1"/>
<circle cx="1543.6" cy="1004.7" r="5.5" fill="#e0242e"/>
<path d="M1541.2 1002.3 1546 1007.1M1546 1002.3 1541.2 1007.1" stroke="#fff" stroke-width="1.1"/>
<!-- notification -->
<path d="M1662 991H1680.5V1005.5H1673.6L1671.2 1008.4 1668.8 1005.5H1662Z" fill="none" stroke="#fff" stroke-width="1.1"/>
</svg>

</body>
</html>
